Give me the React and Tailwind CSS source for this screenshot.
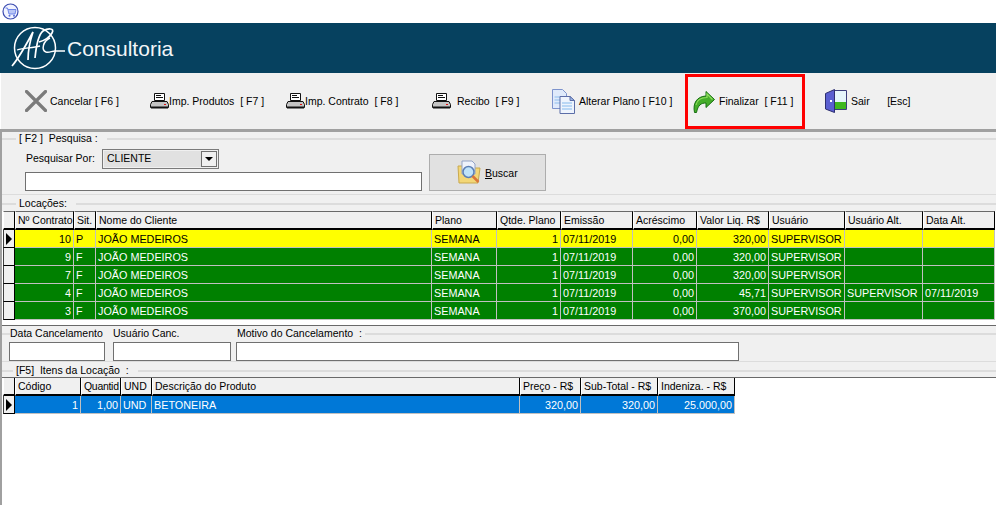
import React from 'react'

const CartIcon = () => (
  <svg width="17" height="17" viewBox="0 0 17 17">
    <circle cx="8.5" cy="8.5" r="7.5" fill="#f2f4ff" stroke="#3c4cb0" strokeWidth="1.2" />
    <path d="M3.5 5h2l1.5 6h6l1-4.5H6" fill="#b9c6f5" stroke="#6f86e8" strokeWidth="1" />
    <circle cx="7.5" cy="12.8" r="1" fill="#5a6fd8" />
    <circle cx="12" cy="12.8" r="1" fill="#5a6fd8" />
  </svg>
)

const Logo = () => (
  <svg width="72" height="50" viewBox="0 0 72 50" fill="none" stroke="#fff">
    <circle cx="35" cy="25" r="20.5" strokeWidth="1.5" />
    <path d="M12 43 C18 36 25 24 33 9 C30 18 28 28 28 37" strokeWidth="1.7" />
    <path d="M17 27 C24 25 32 25 40 23" strokeWidth="1.3" />
    <path d="M35 35 C36 25 38 12 43 8 C48 5 55 5 52 10 C50 14 44 18 39 19" strokeWidth="1.7" />
    <path d="M50 15 C43 18 41 27 46 29 C49 30 52 28 55 28 L65 28" strokeWidth="1.5" />
  </svg>
)

const CloseIcon = () => (
  <svg width="22" height="22" viewBox="0 0 22 22">
    <path d="M1.5 1.5L20.5 20.5M20.5 1.5L1.5 20.5" stroke="#7b7b7b" strokeWidth="3.2" strokeLinecap="round" />
  </svg>
)

const PrinterIcon = () => (
  <svg width="19" height="16" viewBox="0 0 19 16">
    <path d="M4.5 .5h10v7h-10z" fill="#fff" stroke="#111" />
    <path d="M6 2.5h5M6 4.5h7" stroke="#111" />
    <path d="M2 8.5h15l1.5 3v3H.5v-3z" fill="#c4c4c4" stroke="#111" />
    <path d="M1 13.5h17v2H1z" fill="#111" />
    <path d="M14 11h2v1h-2z" fill="#e01010" />
  </svg>
)

const DocsIcon = () => (
  <svg width="23" height="25" viewBox="0 0 23 25">
    <path d="M.5 .5h10l4 4v15H.5z" fill="#dfeafb" stroke="#7d93cc" />
    <path d="M2.5 8h9M2.5 11h9M2.5 14h9" stroke="#a9cdf2" strokeWidth="1.5" />
    <path d="M8 7.5h10l4.500 4v13H8z" fill="#eef4fd" stroke="#5c6ea8" />
    <path d="M10 14h10M10 17h10M10 20h10" stroke="#a9cdf2" strokeWidth="1.5" />
    <path d="M18 7.500v4h4.500z" fill="#9cb6e4" stroke="#5c6ea8" />
  </svg>
)

const ArrowIcon = () => (
  <svg width="22" height="22" viewBox="0 0 22 22">
    <path d="M13 .5L21.500 8.500 13 16.500V12C8 12 5 14 3.500 21.500H1.500C-.5 12 4 5.500 13 5z" fill="#45ad2a" stroke="#176f12" strokeWidth="1" />
    <path d="M3 14C4 9 8 6.500 14 6.500V3L19.500 8.500" fill="none" stroke="#8fdc5e" strokeWidth="1.200" />
  </svg>
)

const DoorIcon = () => (
  <svg width="22" height="24" viewBox="0 0 22 24">
    <path d="M9 1.500h12.500v19H9z" fill="#e6f6fb" stroke="#3c3f7c" />
    <path d="M10 13h11v7H10z" fill="#3fb81f" />
    <path d="M.5 4.500L9.500 .5v23L.5 20z" fill="#5a5fd0" stroke="#2d2f70" />
    <path d="M5 11h2v2H5z" fill="#fff" />
  </svg>
)

const SearchFolderIcon = () => (
  <svg width="25" height="25" viewBox="0 0 25 25">
    <path d="M1 6h7l2 2h13l-2 15H2z" fill="#f3d777" stroke="#c9a94e" />
    <path d="M5 1h10l3 3v10H5z" fill="#eef2fb" stroke="#93a3c6" />
    <circle cx="11.500" cy="12" r="5.500" fill="#bfe3fa" stroke="#5c7fb5" strokeWidth="1.500" />
    <path d="M15.500 16l6 6" stroke="#d9763a" strokeWidth="2.500" />
  </svg>
)

const toolbar = [
  { icon: <CloseIcon />, label: 'Cancelar [ F6 ]', box: 'ml-[24px] w-[125px] gap-[3px]' },
  { icon: <PrinterIcon />, label: 'Imp. Produtos  [ F7 ]', box: 'w-[136px] gap-0' },
  { icon: <PrinterIcon />, label: 'Imp. Contrato  [ F8 ]', box: 'w-[146px] gap-0' },
  { icon: <PrinterIcon />, label: 'Recibo  [ F9 ]', box: 'w-[120px] gap-[6px]' },
  { icon: <DocsIcon />, label: 'Alterar Plano [ F10 ]', box: 'w-[133px] gap-[4px]' },
]

const locacaoCols = 'grid grid-cols-[12px_59px_22px_336px_65px_64px_72px_64px_72px_76px_78px_72px]'
const itemCols = 'grid grid-cols-[12px_66px_40px_31px_368px_61px_77px_77px] w-[732px]'

const locacaoHeader = ['Nº Contrato', 'Sit.', 'Nome do Cliente', 'Plano', 'Qtde. Plano', 'Emissão', 'Acréscimo', 'Valor Liq. R$', 'Usuário', 'Usuário Alt.', 'Data Alt.']
const locacaoRows = [
  ['10', 'P', '320,00', '', ''],
  ['9', 'F', '320,00', '', ''],
  ['7', 'F', '320,00', '', ''],
  ['4', 'F', '45,71', 'SUPERVISOR', '07/11/2019'],
  ['3', 'F', '370,00', '', ''],
]

const HeaderCell = ({ flat, children }) => (
  <div className={`bg-[#f0f0f0] border-r border-b-2 border-black border-l border-l-white pl-[2px] whitespace-nowrap overflow-hidden ${flat ? 'h-[18px] leading-[17px]' : 'h-[19px] border-t border-t-[#696969] leading-[17px]'}`}>
    {children}
  </div>
)

const Indicator = ({ active }) => (
  <div className="h-[18px] bg-[#f0f0f0] border-r border-b border-black border-l border-l-[#404040] flex items-center justify-center">
    {active && <div className="w-0 h-0 border-y-[6px] border-y-transparent border-l-[6px] border-l-black" />}
  </div>
)

const Cell = ({ right, tone, children }) => (
  <div className={`h-[18px] border-r border-b border-[#c0c0c0] px-[2px] text-[10.8px] leading-[18px] whitespace-nowrap overflow-hidden ${right ? 'text-right' : ''} ${tone}`}>
    {children}
  </div>
)

const GroupTitle = ({ lead = 'w-[14px]', children }) => (
  <div className="flex items-center h-[13px]">
    <div className={`${lead} h-[2px] bg-[#dcdcdc]`} />
    <span className="px-[3px] leading-[13px] whitespace-pre">{children}</span>
    <div className="flex-1 ml-[6px] h-[2px] bg-[#dcdcdc]" />
  </div>
)

export default function App() {
  return (
    <div className="w-[996px] h-[505px] overflow-hidden bg-white text-[10.5px] text-black font-['Liberation_Sans',sans-serif] flex flex-col">
      <div className="h-[23px] pl-[2px] pt-[3px]">
        <CartIcon />
      </div>

      <div className="h-[50px] bg-[#06415f] flex items-center">
        <Logo />
        <span className="text-[21px] text-[#f2f6f8] -ml-[5px] mt-[1px]">Consultoria</span>
      </div>

      <div className="h-[56px] bg-[#f0f0f0] border-l-[1px] border-white flex items-center">
        {toolbar.map((b) => (
          <div key={b.label} className={`flex items-center shrink-0 ${b.box}`}>
            {b.icon}
            <span className="whitespace-pre mt-[2px]">{b.label}</span>
          </div>
        ))}
        <div className="w-[120px] h-[55px] self-start mt-[1px] border-[3px] border-[#ff0000] flex items-center pl-[5px] gap-[4px] shrink-0">
          <ArrowIcon />
          <span className="whitespace-pre mt-[1px]">Finalizar  [ F11 ]</span>
        </div>
        <div className="ml-[20px] flex items-center gap-[4px] shrink-0">
          <DoorIcon />
          <span className="whitespace-pre mt-[2px]">Sair      [Esc]</span>
        </div>
      </div>

      <div className="h-[3px] bg-[#a0a0a0]" />

      <div className="flex-1 bg-[#f0f0f0] border-l-2 border-[#a0a0a0] flex flex-col min-h-0">
        {/* pesquisa */}
        <div className="h-[63px] border-b border-[#dcdcdc] flex flex-col">
          <GroupTitle>[ F2 ]  Pesquisa :</GroupTitle>
          <div className="flex items-end pl-[23px] mt-[4px]">
            <div className="w-[397px]">
              <div className="flex items-center h-[20px]">
                <span className="w-[77px] pl-[1px] whitespace-nowrap">Pesquisar Por:</span>
                <div className="w-[117px] h-[20px] border border-[#7a7a7a] p-[1px] bg-[#f0f0f0]">
                  <div className="h-full bg-[#e1e1e1] flex items-center justify-between pl-[3px]">
                    <span>CLIENTE</span>
                    <div className="w-[16px] h-full bg-[#f0f0f0] border border-[#707070] flex items-center justify-center">
                      <div className="w-0 h-0 border-x-[4px] border-x-transparent border-t-[4px] border-t-black" />
                    </div>
                  </div>
                </div>
              </div>
              <div className="h-[19px] mt-[3px] bg-white border border-[#707070]" />
            </div>
            <div className="ml-[7px] w-[117px] h-[37px] bg-[#e1e1e1] border border-[#adadad] flex items-center pl-[27px] gap-[3px]">
              <SearchFolderIcon />
              <span className="mt-[2px]"><span className="underline">B</span>uscar</span>
            </div>
          </div>
        </div>

        {/* locacoes */}
        <div className="mt-[2px]">
          <GroupTitle>Locações:</GroupTitle>
        </div>
        <div className="h-[115px] mt-[1px] bg-white border-b border-[#696969] pl-[1px]">
          <div className={locacaoCols}>
            <HeaderCell />
            {locacaoHeader.map((h) => (
              <HeaderCell key={h}>{h}</HeaderCell>
            ))}
          </div>
          {locacaoRows.map((r, i) => {
            const tone = i === 0 ? 'bg-[#ffff00] text-black' : 'bg-[#008000] text-white'
            return (
              <div key={r[0]} className={locacaoCols}>
                <Indicator active={i === 0} />
                <Cell right tone={tone}>{r[0]}</Cell>
                <Cell tone={tone}>{r[1]}</Cell>
                <Cell tone={tone}>JOÃO MEDEIROS</Cell>
                <Cell tone={tone}>SEMANA</Cell>
                <Cell right tone={tone}>1</Cell>
                <Cell tone={tone}>07/11/2019</Cell>
                <Cell right tone={tone}>0,00</Cell>
                <Cell right tone={tone}>{r[2]}</Cell>
                <Cell tone={tone}>SUPERVISOR</Cell>
                <Cell tone={tone}>{r[3]}</Cell>
                <Cell tone={tone}>{r[4]}</Cell>
              </div>
            )
          })}
        </div>

        {/* cancelamento */}
        <div className="h-[36px] border-b border-[#dcdcdc] flex flex-col">
          <div className="flex items-center h-[16px]">
            <div className="w-[8px] h-[2px] bg-[#dcdcdc]" />
            <span className="w-[103px] whitespace-nowrap">Data Cancelamento</span>
            <span className="w-[124px] whitespace-nowrap">Usuário Canc.</span>
            <span className="whitespace-pre">Motivo do Cancelamento  :</span>
            <div className="flex-1 ml-[3px] h-[2px] bg-[#dcdcdc]" />
          </div>
          <div className="flex pl-[7px]">
            <div className="w-[96px] h-[19px] bg-white border border-[#707070]" />
            <div className="w-[118px] h-[19px] ml-[8px] bg-white border border-[#707070]" />
            <div className="w-[503px] h-[19px] ml-[5px] bg-white border border-[#707070]" />
          </div>
        </div>

        {/* itens */}
        <div className="mt-[2px] h-[13px]">
          <GroupTitle lead="w-[11px]">[F5]  Itens da Locação  :</GroupTitle>
        </div>
        <div className="flex-1 bg-white border-t border-[#696969] pl-[1px]">
          <div className={itemCols}>
            <HeaderCell flat />
            <HeaderCell flat>Código</HeaderCell>
            <HeaderCell flat><span className="tracking-[-0.3px]">Quantid</span></HeaderCell>
            {['UND', 'Descrição do Produto', 'Preço - R$', 'Sub-Total - R$', 'Indeniza. - R$'].map((h) => (
              <HeaderCell key={h} flat>{h}</HeaderCell>
            ))}
          </div>
          <div className={itemCols}>
            <Indicator active />
            <Cell right tone="bg-[#0078d7] text-white">1</Cell>
            <Cell right tone="bg-[#0078d7] text-white">1,00</Cell>
            <Cell tone="bg-[#0078d7] text-white">UND</Cell>
            <Cell tone="bg-[#0078d7] text-white">BETONEIRA</Cell>
            <Cell right tone="bg-[#0078d7] text-white">320,00</Cell>
            <Cell right tone="bg-[#0078d7] text-white">320,00</Cell>
            <Cell right tone="bg-[#0078d7] text-white">25.000,00</Cell>
          </div>
        </div>
      </div>
    </div>
  )
}
